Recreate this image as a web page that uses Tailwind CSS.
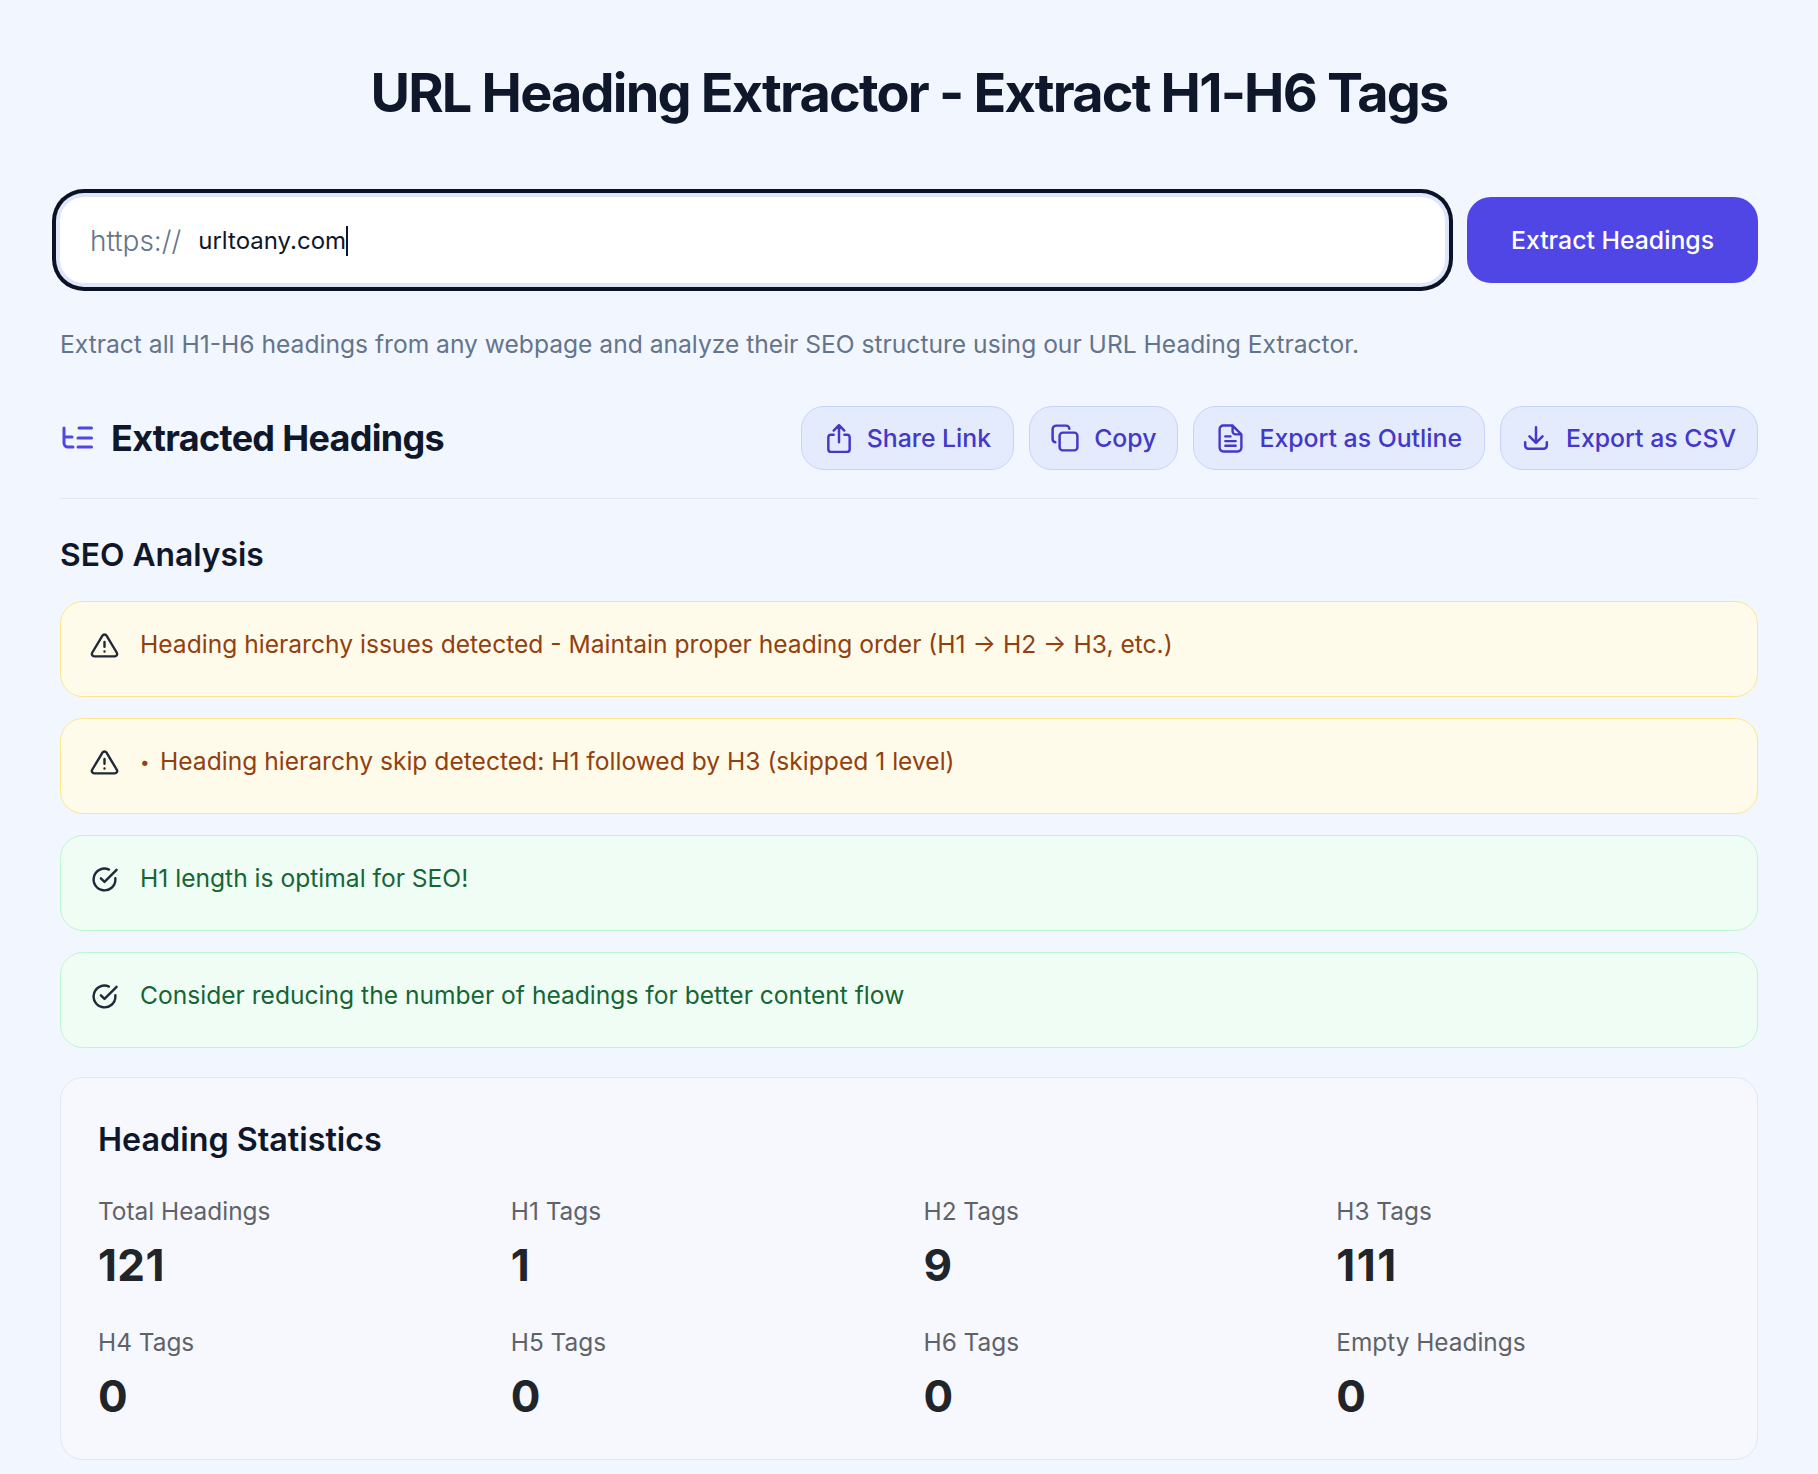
<!DOCTYPE html>
<html lang="en">
<head>
<meta charset="UTF-8">
<title>URL Heading Extractor</title>
<script src="https://cdn.jsdelivr.net/npm/@tailwindcss/browser@4"></script>
</head>
<body class="bg-[#f2f6fe] font-['Inter',sans-serif] text-[#0f172a] min-h-screen">
<div class="px-[60px] pt-[58px]">
  <h1 class="text-center text-[54px] leading-[70px] font-bold tracking-[-1.8px]">URL Heading Extractor - Extract H1-H6 Tags</h1>

  <div class="flex gap-[22px] mt-[69px] h-[86px]">
    <div class="flex-1 flex items-center bg-white rounded-[24px] pl-[30px] pt-[2px] shadow-[0_0_0_4px_#dfe6fa,0_0_0_8px_#0b1226]">
      <span class="text-[28px] font-[350] text-[#64748b]">https://</span>
      <span class="ml-[17px] text-[24px] text-[#0f172a] border-r-2 border-[#0f172a] leading-[30px]">urltoany.com</span>
    </div>
    <button class="w-[291px] bg-[#4f46e5] rounded-[24px] pt-[2px] text-white text-[24.8px] font-medium">Extract Headings</button>
  </div>

  <p class="mt-[44px] text-[24.6px] leading-[34px] text-[#64748b]">Extract all H1-H6 headings from any webpage and analyze their SEO structure using our URL Heading Extractor.</p>

  <div class="flex items-center justify-between mt-[45px] pb-[28px] border-b border-[#e2e8f0]">
    <div class="flex items-center gap-[18px]">
      <svg class="w-[31px] h-[24px] ml-[2px] text-[#4f46e5]" viewBox="0 0 31 24" fill="none" stroke="currentColor" stroke-width="3" stroke-linecap="round" stroke-linejoin="round"><path d="M2 2v15a4 4 0 0 0 4 4h5M2 11h8M17 2h12.500M16 12h13.500M16 21h13.500"/></svg>
      <h2 class="text-[36px] font-bold tracking-[-0.7px]">Extracted Headings</h2>
    </div>
    <div class="flex gap-[15px]">
      <button class="flex items-center gap-[15px] h-[64px] pl-[24px] pr-[22px] pt-[2px] rounded-[23px] bg-[#e4ebfd] border border-[#c7d2fe] text-[#4338ca] text-[24.8px] font-medium">
        <svg class="w-[26px] h-[32px] -mt-[2px]" viewBox="0 0 24 30" fill="none" stroke="currentColor" stroke-width="2.300" stroke-linecap="round" stroke-linejoin="round"><path d="M7 12H4.500A2.500 2.500 0 0 0 2 14.500v11A2.500 2.500 0 0 0 4.500 28h15a2.500 2.500 0 0 0 2.500-2.500v-11a2.500 2.500 0 0 0-2.500-2.500H17M12 19V3M7 8l5-5 5 5"/></svg>Share Link</button>
      <button class="flex items-center gap-[15px] h-[64px] pl-[21px] pr-[21px] pt-[2px] rounded-[23px] bg-[#e4ebfd] border border-[#c7d2fe] text-[#4338ca] text-[24.8px] font-medium">
        <svg class="w-[28px] h-[28px] -mt-[2px]" viewBox="0 0 26 26" fill="none" stroke="currentColor" stroke-width="2.300" stroke-linecap="round" stroke-linejoin="round"><rect x="8" y="8" width="16.500" height="16.500" rx="3"/><path d="M4 17a3 3 0 0 1-2.500-3V5A3.500 3.500 0 0 1 5 1.500h9a3 3 0 0 1 3 3"/></svg>Copy</button>
      <button class="flex items-center gap-[16px] h-[64px] pl-[24px] pr-[22px] pt-[2px] rounded-[23px] bg-[#e4ebfd] border border-[#c7d2fe] text-[#4338ca] text-[24.8px] font-medium">
        <svg class="w-[25px] h-[29px] -mt-[2px]" viewBox="0 0 24 28" fill="none" stroke="currentColor" stroke-width="2.300" stroke-linecap="round" stroke-linejoin="round"><path d="M14 1.500H5A3.500 3.500 0 0 0 1.500 5v18A3.500 3.500 0 0 0 5 26.500h14a3.500 3.500 0 0 0 3.500-3.500V10zM14 1.500V7a3 3 0 0 0 3 3h5.500M7 12h5M7 16.500h10M7 21h10"/></svg>Export as Outline</button>
      <button class="flex items-center gap-[17px] h-[64px] pl-[22px] pr-[21px] pt-[2px] rounded-[23px] bg-[#e4ebfd] border border-[#c7d2fe] text-[#4338ca] text-[24.8px] font-medium">
        <svg class="w-[26px] h-[26px] -mt-[2px]" viewBox="0 0 24 24" fill="none" stroke="currentColor" stroke-width="2.300" stroke-linecap="round" stroke-linejoin="round"><path d="M2 16v3a3 3 0 0 0 3 3h14a3 3 0 0 0 3-3v-3M12 2v14M6 10.500l6 6 6-6"/></svg>Export as CSV</button>
    </div>
  </div>

  <h3 class="mt-[36px] text-[31.800px] leading-[40px] font-semibold">SEO Analysis</h3>

  <div class="mt-[26px] flex flex-col gap-[21px]">
    <div class="flex gap-[21px] h-[96px] pl-[29px] pt-[26px] rounded-[23px] bg-[#fffbeb] border border-[#fde68a] text-[#92400e] text-[24.6px] leading-[32px]">
      <svg class="w-[29px] h-[29px] mt-[3px] text-[#1f2937] shrink-0" viewBox="0 0 24 24" fill="none" stroke="currentColor" stroke-width="2" stroke-linecap="round" stroke-linejoin="round"><path d="M10.3 3.900 1.800 18a2 2 0 0 0 1.700 3h17a2 2 0 0 0 1.700-3L13.700 3.900a2 2 0 0 0-3.400 0zM12 9v4M12 17h.01"/></svg>
      <span>Heading hierarchy issues detected - Maintain proper heading order (H1 → H2 → H3, etc.)</span>
    </div>
    <div class="flex gap-[21px] h-[96px] pl-[29px] pt-[26px] rounded-[23px] bg-[#fffbeb] border border-[#fde68a] text-[#92400e] text-[24.6px] leading-[32px]">
      <svg class="w-[29px] h-[29px] mt-[3px] text-[#1f2937] shrink-0" viewBox="0 0 24 24" fill="none" stroke="currentColor" stroke-width="2" stroke-linecap="round" stroke-linejoin="round"><path d="M10.3 3.900 1.800 18a2 2 0 0 0 1.700 3h17a2 2 0 0 0 1.700-3L13.700 3.900a2 2 0 0 0-3.400 0zM12 9v4M12 17h.01"/></svg>
      <span><span class="inline-block w-[20px] text-[17px] align-[2px]">•</span>Heading hierarchy skip detected: H1 followed by H3 (skipped 1 level)</span>
    </div>
    <div class="flex gap-[21px] h-[96px] pl-[29px] pt-[26px] rounded-[23px] bg-[#f0fdf4] border border-[#bbf7d0] text-[#166534] text-[24.6px] leading-[32px]">
      <svg class="w-[29px] h-[29px] mt-[3px] text-[#1f2937] shrink-0" viewBox="0 0 24 24" fill="none" stroke="currentColor" stroke-width="2" stroke-linecap="round" stroke-linejoin="round"><path d="M21 11v1a9 9 0 1 1-5.300-8.200M22 4 12 14l-3-3"/></svg>
      <span>H1 length is optimal for SEO!</span>
    </div>
    <div class="flex gap-[21px] h-[96px] pl-[29px] pt-[26px] rounded-[23px] bg-[#f0fdf4] border border-[#bbf7d0] text-[#166534] text-[24.6px] leading-[32px]">
      <svg class="w-[29px] h-[29px] mt-[3px] text-[#1f2937] shrink-0" viewBox="0 0 24 24" fill="none" stroke="currentColor" stroke-width="2" stroke-linecap="round" stroke-linejoin="round"><path d="M21 11v1a9 9 0 1 1-5.300-8.200M22 4 12 14l-3-3"/></svg>
      <span>Consider reducing the number of headings for better content flow</span>
    </div>
  </div>

  <div class="mt-[29px] h-[383px] rounded-[23px] bg-[#f6f8fe] border border-[#e2e8f0] px-[37px] pt-[42px]">
    <h3 class="text-[32.3px] leading-[40px] font-semibold">Heading Statistics</h3>
    <div class="grid grid-cols-4 mt-[35px] gap-x-[29px] gap-y-[36px]">
      <div><div class="text-[24.4px] leading-[32px] text-[#5f6368]">Total Headings</div><div class="mt-[13px] text-[44px] leading-[50px] font-bold text-[#212529] tracking-[0.4px]">121</div></div>
      <div><div class="text-[24.4px] leading-[32px] text-[#5f6368]">H1 Tags</div><div class="mt-[13px] text-[44px] leading-[50px] font-bold text-[#212529]">1</div></div>
      <div><div class="text-[24.4px] leading-[32px] text-[#5f6368]">H2 Tags</div><div class="mt-[13px] text-[44px] leading-[50px] font-bold text-[#212529]">9</div></div>
      <div><div class="text-[24.4px] leading-[32px] text-[#5f6368]">H3 Tags</div><div class="mt-[13px] text-[44px] leading-[50px] font-bold text-[#212529] tracking-[1.5px]">111</div></div>
      <div><div class="text-[24.4px] leading-[32px] text-[#5f6368]">H4 Tags</div><div class="mt-[13px] text-[44px] leading-[50px] font-bold text-[#212529]">0</div></div>
      <div><div class="text-[24.4px] leading-[32px] text-[#5f6368]">H5 Tags</div><div class="mt-[13px] text-[44px] leading-[50px] font-bold text-[#212529]">0</div></div>
      <div><div class="text-[24.4px] leading-[32px] text-[#5f6368]">H6 Tags</div><div class="mt-[13px] text-[44px] leading-[50px] font-bold text-[#212529]">0</div></div>
      <div><div class="text-[24.4px] leading-[32px] text-[#5f6368]">Empty Headings</div><div class="mt-[13px] text-[44px] leading-[50px] font-bold text-[#212529]">0</div></div>
    </div>
  </div>
</div>
</body>
</html>
